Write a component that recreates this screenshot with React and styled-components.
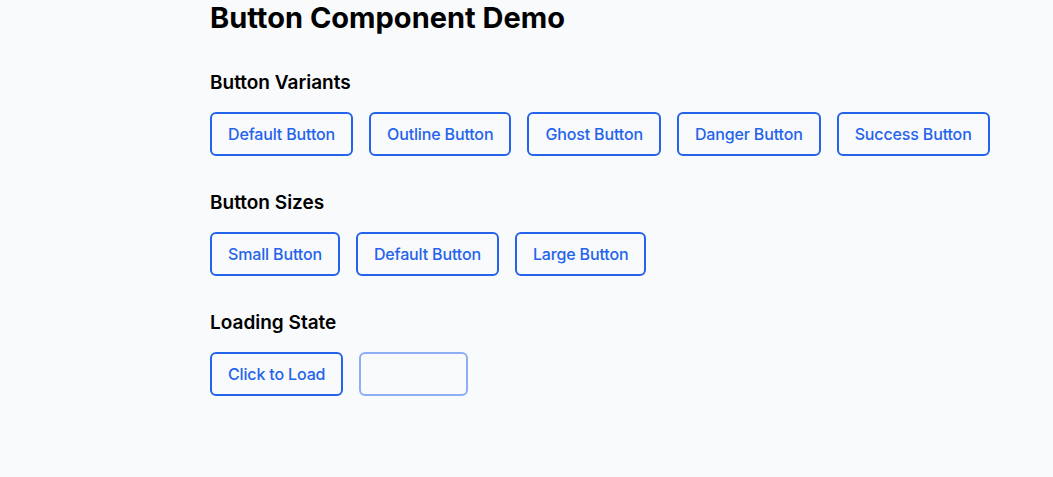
import React from "react";
import styled, { createGlobalStyle } from "styled-components";

const GlobalStyle = createGlobalStyle`
  html, body {
    margin: 0;
    padding: 0;
    background: #f8fafc;
    font-family: Inter, "Liberation Sans", sans-serif;
    color: #000;
  }
`;

const Page = styled.div`
  padding: 0 0 0 210px;
`;

const Title = styled.h1`
  margin: 0;
  font-size: 29px;
  font-weight: 700;
  line-height: 36px;
`;

const Section = styled.section`
  margin-top: 33px;
`;

const SectionTitle = styled.h2`
  margin: 0 0 15px;
  font-size: 19px;
  font-weight: 600;
  line-height: 28px;
`;

const Row = styled.div`
  display: flex;
  gap: 16px;
  align-items: center;
`;

const Button = styled.button`
  box-sizing: border-box;
  height: 44px;
  padding: 0 16px;
  min-width: ${({ $minWidth }) => $minWidth || "auto"};
  border: 2px solid #2563eb;
  border-radius: 6px;
  background: transparent;
  color: #2563eb;
  font-family: Inter, "Liberation Sans", sans-serif;
  font-size: 16px;
  font-weight: 500;
  letter-spacing: -0.15px;
  cursor: pointer;
  opacity: ${({ disabled }) => (disabled ? 0.5 : 1)};
`;

export default function App() {
  return (
    <>
      <GlobalStyle />
      <Page>
        <Title>Button Component Demo</Title>
        <Section>
          <SectionTitle>Button Variants</SectionTitle>
          <Row>
            <Button>Default Button</Button>
            <Button>Outline Button</Button>
            <Button>Ghost Button</Button>
            <Button>Danger Button</Button>
            <Button>Success Button</Button>
          </Row>
        </Section>
        <Section>
          <SectionTitle>Button Sizes</SectionTitle>
          <Row>
            <Button>Small Button</Button>
            <Button>Default Button</Button>
            <Button>Large Button</Button>
          </Row>
        </Section>
        <Section>
          <SectionTitle>Loading State</SectionTitle>
          <Row>
            <Button>Click to Load</Button>
            <Button disabled $minWidth="109px" />
          </Row>
        </Section>
      </Page>
    </>
  );
}
